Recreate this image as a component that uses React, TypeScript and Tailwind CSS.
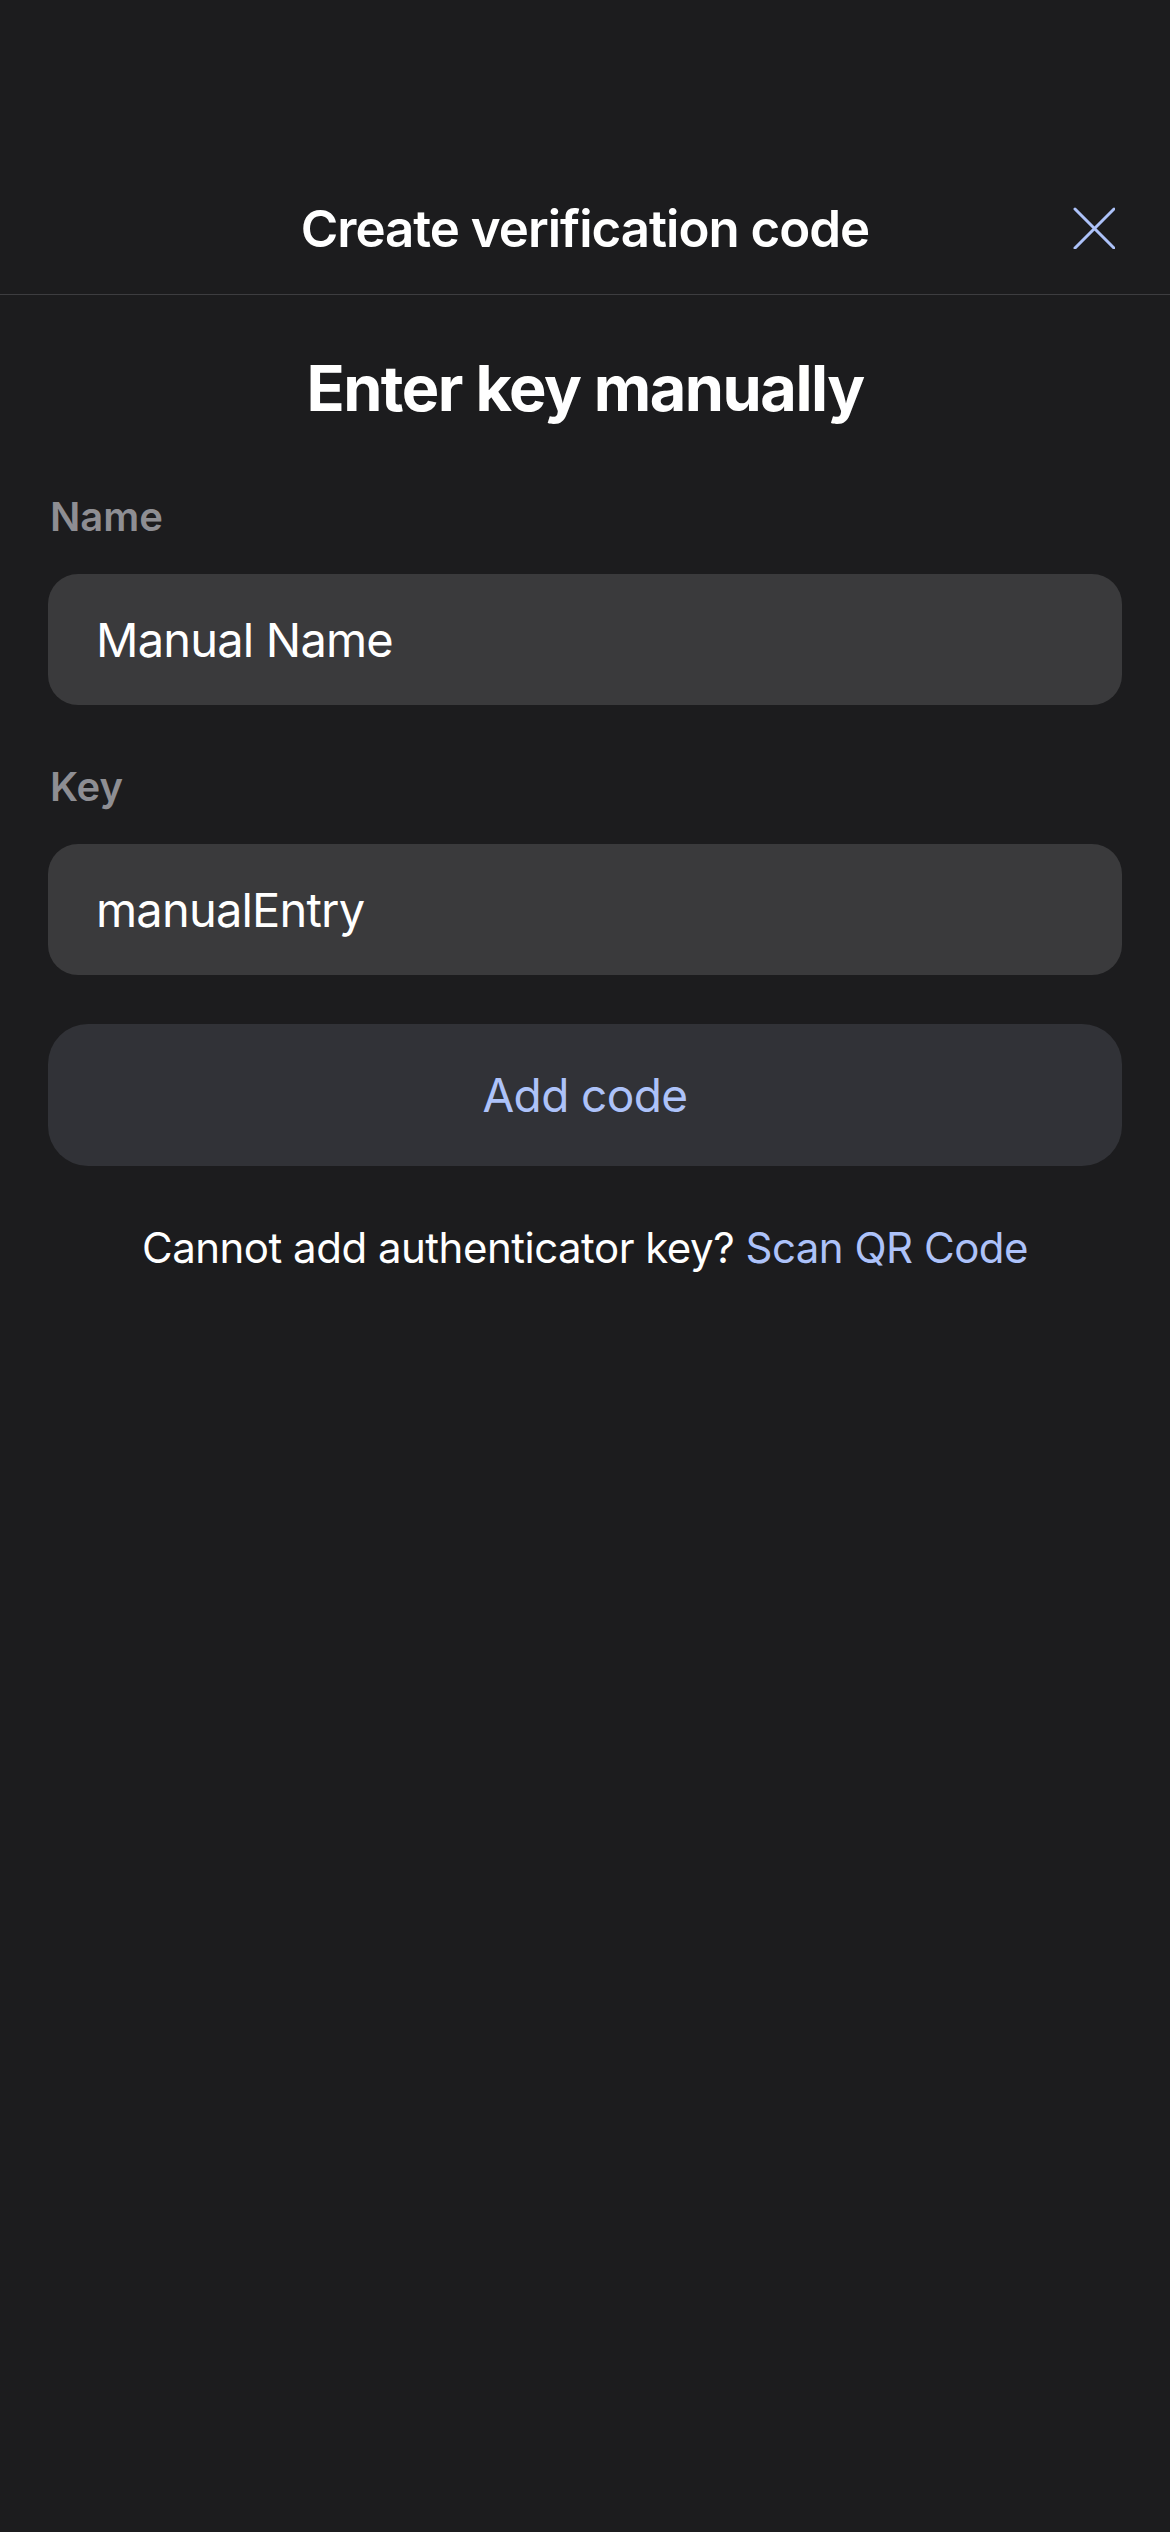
import React from 'react';

/**
 * ManualKeyScreen - Enter an authenticator key by hand
 */
function Field({ label, value }: { label: string; value: string }) {
    return (
        <div className="flex flex-col">
            <label className="text-[40px] leading-[48px] font-semibold text-[#8e8e93] pl-[2px]">{label}</label>
            <div className="mt-[33px] h-[131px] rounded-[30px] bg-[#3a3a3c] flex items-center px-[48px]">
                <span className="text-[47px] text-white leading-none tracking-[-0.8px]">{value}</span>
            </div>
        </div>
    );
}

export default function App() {
    return (
        <div
            className="min-h-[2532px] w-full bg-[#1c1c1e] text-white"
            style={{ fontFamily: 'Inter, "Noto Sans", sans-serif' }}
        >
            {/* Header */}
            <div className="relative h-[295px] border-b border-[#3d3d40] flex items-end justify-center pb-[33px]">
                <h1 className="text-[51px] leading-[64px] font-semibold tracking-[-1px]">Create verification code</h1>
                <button aria-label="Close" className="absolute right-[55px] top-[207px] w-[42px] h-[42px]">
                    <svg viewBox="0 0 42 42" className="w-[42px] h-[42px]" fill="none" stroke="#adc2f9" strokeWidth={3} strokeLinecap="round">
                        <path d="M2 2L41 41M41 2L2 41" />
                    </svg>
                </button>
            </div>

            {/* Body */}
            <div className="px-[48px] pt-[55px] flex flex-col">
                <h2 className="text-center text-[63px] leading-[77px] font-bold tracking-[-1.5px]">Enter key manually</h2>

                <div className="mt-[66px]">
                    <Field label="Name" value="Manual Name" />
                </div>
                <div className="mt-[58px]">
                    <Field label="Key" value="manualEntry" />
                </div>

                <button className="mt-[49px] h-[142px] rounded-[40px] bg-[#313237] text-[46px] tracking-[-0.6px] text-[#adc2f9]">
                    Add code
                </button>

                <p className="mt-[55px] text-center text-[42px] leading-[53px] tracking-[-0.5px]">
                    Cannot add authenticator key? <span className="text-[#adc2f9]">Scan QR Code</span>
                </p>
            </div>
        </div>
    );
}
